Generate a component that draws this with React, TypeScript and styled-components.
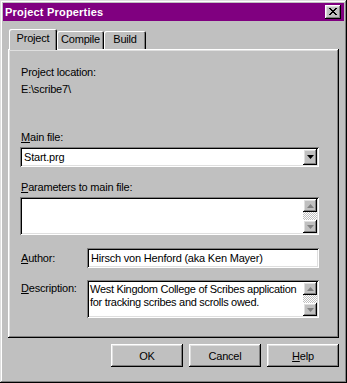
import { FC } from "react";
import styled, { createGlobalStyle } from "styled-components";

const GlobalStyle = createGlobalStyle`
  html, body {
    margin: 0;
    padding: 0;
    background: #c0c0c0;
  }
  body {
    font-family: "Liberation Sans", Arial, sans-serif;
    font-size: 11px;
    letter-spacing: -0.2px;
    color: #000;
  }
`;

const raised = `
  box-shadow: inset -1px -1px #000, inset 1px 1px #fff,
    inset -2px -2px #808080, inset 2px 2px #dfdfdf;
`;

const sunken = `
  box-shadow: inset 1px 1px #808080, inset -1px -1px #fff,
    inset 2px 2px #000, inset -2px -2px #dfdfdf;
`;

const App: FC = () => {
  return (
    <>
      <GlobalStyle />
      <Window>
        <TitleBar>
          <Title>Project Properties</Title>
          <CloseButton>
            <svg width="8" height="7" viewBox="0 0 8 7">
              <path
                d="M0 0h2v1h1v1h2V1h1V0h2v1H7v1H6v1H5v1h1v1h1v1h1v1H6V6H5V5H3v1H2v1H0V6h1V5h1V4h1V3H2V2H1V1H0z"
                fill="#000"
              />
            </svg>
          </CloseButton>
        </TitleBar>

        <Body>
          <TabRow>
            <Tab active w={48}>Project</Tab>
            <Tab w={47}>Compile</Tab>
            <Tab w={42}>Build</Tab>
          </TabRow>

          <Panel>
            <Label>Project location:</Label>
            <Label gap={4}>E:\scribe7\</Label>

            <Label gap={35}>
              <u>M</u>ain file:
            </Label>
            <Combo>
              <FieldText>Start.prg</FieldText>
              <DropButton>
                <svg width="7" height="4" viewBox="0 0 7 4">
                  <path d="M0 0h7L3.5 4z" fill="#000" />
                </svg>
              </DropButton>
            </Combo>

            <Label gap={14}>
              <u>P</u>arameters to main file:
            </Label>
            <TextArea>
              <TextBody />
              <ScrollBar />
            </TextArea>

            <FieldRow gap={13}>
              <RowLabel>
                <u>A</u>uthor:
              </RowLabel>
              <Input>
                <FieldText>Hirsch von Henford (aka Ken Mayer)</FieldText>
              </Input>
            </FieldRow>

            <FieldRow gap={12} top>
              <RowLabel top>
                <u>D</u>escription:
              </RowLabel>
              <TextArea grow>
                <TextBody>
                  West Kingdom College of Scribes application
                  <br />
                  for tracking scribes and scrolls owed.
                </TextBody>
                <ScrollBar />
              </TextArea>
            </FieldRow>
          </Panel>

          <ButtonRow>
            <Button>OK</Button>
            <Button>Cancel</Button>
            <Button>
              <u>H</u>elp
            </Button>
          </ButtonRow>
        </Body>
      </Window>
    </>
  );
};

const ScrollBar: FC = () => (
  <Scroll>
    <ScrollBtn>
      <svg width="7" height="4" viewBox="0 0 7 4">
        <path d="M3.5 0L7 4H0z" fill="#808080" />
      </svg>
    </ScrollBtn>
    <Track />
    <ScrollBtn>
      <svg width="7" height="4" viewBox="0 0 7 4">
        <path d="M0 0h7L3.5 4z" fill="#808080" />
      </svg>
    </ScrollBtn>
  </Scroll>
);

export default App;

const Window = styled.div`
  width: 347px;
  height: 383px;
  box-sizing: border-box;
  padding: 3px;
  background: #c0c0c0;
  box-shadow: inset -1px -1px #000, inset 1px 1px #dfdfdf,
    inset -2px -2px #808080, inset 2px 2px #fff;
  display: flex;
  flex-direction: column;
`;

const TitleBar = styled.div`
  height: 18px;
  background: #800080;
  display: flex;
  align-items: center;
  justify-content: space-between;
  padding: 0 3px 0 2px;
`;

const Title = styled.span`
  color: #fff;
  font-weight: bold;
  font-size: 11px;
  letter-spacing: 0.2px;
`;

const CloseButton = styled.div`
  width: 16px;
  height: 14px;
  background: #c0c0c0;
  ${raised}
  display: flex;
  align-items: center;
  justify-content: center;
  padding-bottom: 1px;
  box-sizing: border-box;
`;

const Body = styled.div`
  flex: 1;
  display: flex;
  flex-direction: column;
  padding: 0 5px;
`;

const TabRow = styled.div`
  height: 20px;
  margin-top: 8px;
  display: flex;
  align-items: flex-end;
  padding-left: 1px;
`;

const Tab = styled.div<{ active?: boolean; w: number }>`
  position: relative;
  z-index: ${({ active }) => (active ? 2 : 0)};
  width: ${({ w }) => w}px;
  height: ${({ active }) => (active ? 21 : 18)}px;
  margin-bottom: ${({ active }) => (active ? -1 : 0)}px;
  box-sizing: border-box;
  background: #c0c0c0;
  border-radius: 2px 2px 0 0;
  box-shadow: inset 1px 1px #fff, inset -1px 0 #000, inset -2px 0 #808080;
  display: flex;
  justify-content: center;
  padding-top: ${({ active }) => (active ? 3 : 2)}px;
  font-size: 11px;
  line-height: 13px;
`;

const Panel = styled.div`
  position: relative;
  z-index: 1;
  height: 289px;
  box-sizing: border-box;
  padding: 17px 20px 0 12px;
  background: #c0c0c0;
  ${raised}
  display: flex;
  flex-direction: column;
`;

const Label = styled.div<{ gap?: number }>`
  margin-top: ${({ gap }) => gap ?? 0}px;
  line-height: 13px;
  padding-left: 1px;
  white-space: nowrap;
`;

const Combo = styled.div`
  margin-top: 3px;
  height: 20px;
  box-sizing: border-box;
  background: #fff;
  ${sunken}
  display: flex;
  align-items: center;
  padding: 2px;
`;

const FieldText = styled.div`
  flex: 1;
  padding-left: 2px;
  line-height: 13px;
  white-space: nowrap;
`;

const DropButton = styled.div`
  width: 14px;
  height: 16px;
  box-sizing: border-box;
  background: #c0c0c0;
  ${raised}
  display: flex;
  align-items: center;
  justify-content: center;
`;

const TextArea = styled.div<{ grow?: boolean }>`
  margin-top: ${({ grow }) => (grow ? 0 : 3)}px;
  flex: ${({ grow }) => (grow ? 1 : "none")};
  height: 38px;
  box-sizing: border-box;
  background: #fff;
  ${sunken}
  display: flex;
  padding: 2px;
`;

const TextBody = styled.div`
  flex: 1;
  padding: 1px 0 0 1px;
  line-height: 13px;
  letter-spacing: -0.3px;
  white-space: nowrap;
  overflow: hidden;
`;

const Scroll = styled.div`
  width: 14px;
  flex-shrink: 0;
  display: flex;
  flex-direction: column;
`;

const ScrollBtn = styled.div`
  height: 13px;
  box-sizing: border-box;
  background: #c0c0c0;
  ${raised}
  display: flex;
  align-items: center;
  justify-content: center;
`;

const Track = styled.div`
  flex: 1;
  background: repeating-conic-gradient(#fff 0 25%, #c0c0c0 0 50%) 0 0 / 2px
    2px;
`;

const FieldRow = styled.div<{ gap: number; top?: boolean }>`
  margin-top: ${({ gap }) => gap}px;
  display: flex;
  align-items: ${({ top }) => (top ? "flex-start" : "center")};
`;

const RowLabel = styled.div<{ top?: boolean }>`
  width: 67px;
  flex-shrink: 0;
  padding-left: 1px;
  padding-top: ${({ top }) => (top ? 2 : 0)}px;
  box-sizing: border-box;
  line-height: 13px;
  white-space: nowrap;
`;

const Input = styled.div`
  flex: 1;
  height: 20px;
  box-sizing: border-box;
  background: #fff;
  ${sunken}
  display: flex;
  align-items: center;
  padding: 2px;
`;

const ButtonRow = styled.div`
  margin-top: 6px;
  display: flex;
  justify-content: flex-end;
  gap: 6px;
`;

const Button = styled.div`
  width: 72px;
  height: 23px;
  box-sizing: border-box;
  background: #c0c0c0;
  ${raised}
  display: flex;
  align-items: center;
  justify-content: center;
  font-size: 11px;
`;
